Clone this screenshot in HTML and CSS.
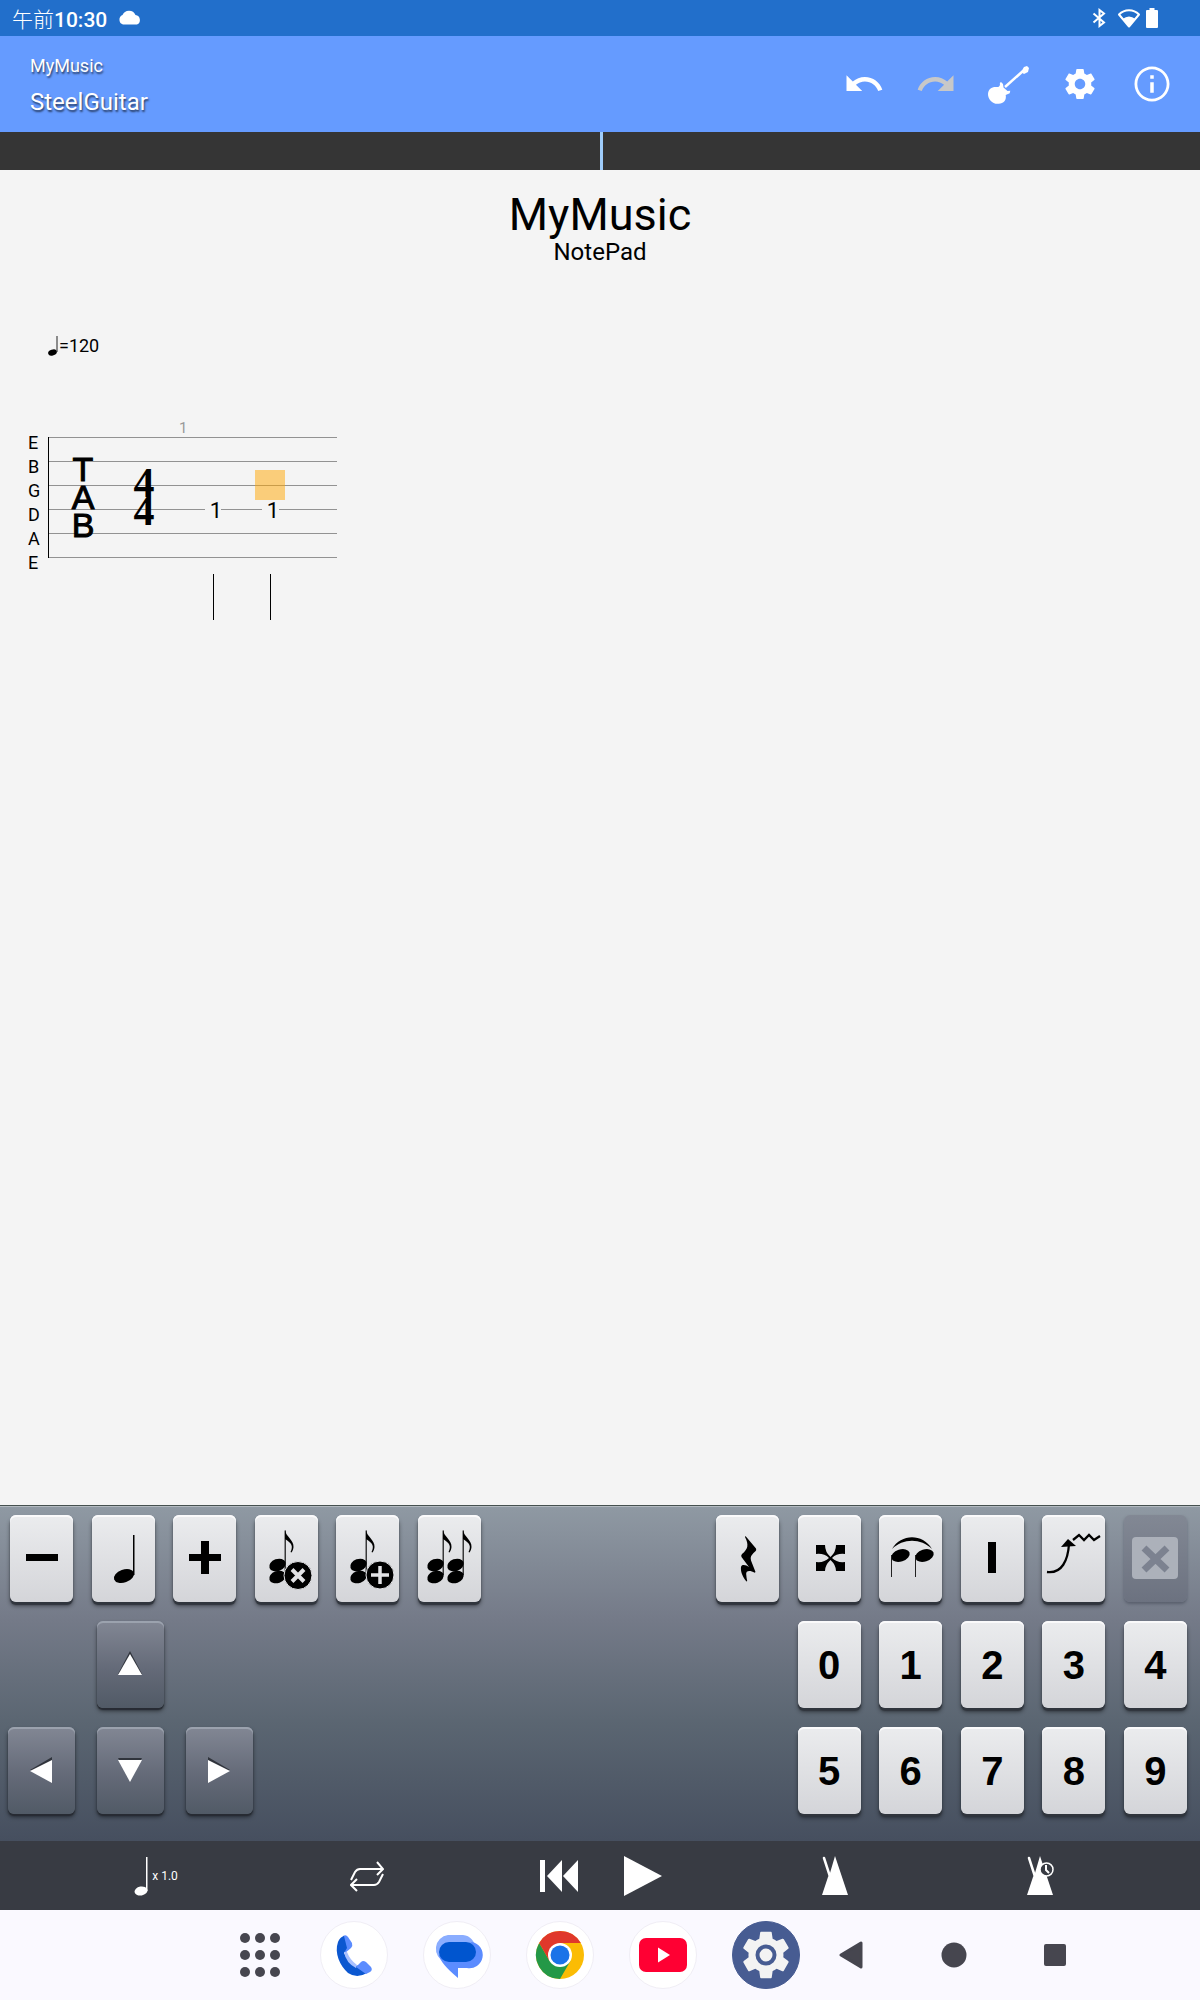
FILE: index.html
```html
<!DOCTYPE html>
<html lang="ja">
<head>
<meta charset="utf-8">
<meta name="viewport" content="width=device-width, initial-scale=1">
<title>MyMusic - SteelGuitar</title>
<link rel="stylesheet" href="styles.css">
</head>
<body>
<svg class="defs" aria-hidden="true">
  <defs>
    <path id="gear" d="M19.43 12.98c.04-.32.07-.64.07-.98s-.03-.66-.07-.98l2.11-1.65c.19-.15.24-.42.12-.64l-2-3.46c-.12-.22-.39-.3-.61-.22l-2.49 1c-.52-.4-1.08-.73-1.69-.98l-.38-2.65C14.46 2.18 14.25 2 14 2h-4c-.25 0-.46.18-.49.42l-.38 2.65c-.61.25-1.17.59-1.69.98l-2.49-1c-.23-.09-.49 0-.61.22l-2 3.46c-.13.22-.07.49.12.64l2.11 1.65c-.04.32-.07.65-.07.98s.03.66.07.98l-2.11 1.65c-.19.15-.24.42-.12.64l2 3.46c.12.22.39.3.61.22l2.49-1c.52.4 1.08.73 1.69.98l.38 2.65c.03.24.24.42.49.42h4c.25 0 .46-.18.49-.42l.38-2.65c.61-.25 1.17-.59 1.69-.98l2.49 1c.23.09.49 0 .61-.22l2-3.46c.12-.22.07-.49-.12-.64l-2.11-1.65zM12 15.5c-1.93 0-3.5-1.57-3.5-3.5s1.57-3.5 3.5-3.5 3.500 1.570 3.500 3.500-1.570 3.500-3.500 3.500z"/>
    <g id="chord">
      <ellipse cx="22.500" cy="50" rx="8.500" ry="6" transform="rotate(-20 22.500 50)"/>
      <ellipse cx="22.500" cy="62" rx="8.500" ry="6" transform="rotate(-20 22.500 62)"/>
      <path d="M29.500 15.500h1.500V60h-1.500z" opacity=".75"/>
      <path d="M30 15c1 7 9 10 8.500 17-.2 2-.8 4-2 5.500l-1-.5c3-6 1-9-5.500-13z"/>
    </g>
    <g id="metronome">
      <path d="M18 1L31 40H5L11 22 13 18z"/>
      <path d="M7 3l5.500 17" stroke="#fff" stroke-width="2.500" stroke-linecap="round"/>
    </g>
  </defs>
</svg>

<div class="statusbar">
  <div class="clock"><span><span class="ampm">午前</span>10:30</span>
    <svg width="24" height="16" viewBox="0 0 24 16" fill="#fff"><path d="M5 14.500a5 5 0 0 1-.5-9.400A7 7 0 0 1 17.500 5a5 5 0 0 1 1.500 9.500z"/></svg>
  </div>
  <div class="signals">
    <svg width="14" height="20" viewBox="0 0 14 20" fill="none" stroke="#fff" stroke-width="2"><path d="M1.500 5.500L12 14.500 7.500 18V2L12 5.500 1.500 14.500"/></svg>
    <svg width="24" height="20" viewBox="0 0 24 20"><path d="M12 18.500L2 6.500C7.500.8 16.500.8 22 6.500z" fill="none" stroke="#fff" stroke-width="2" stroke-linejoin="round"/><path d="M12 19L5.500 11q6.500-5 13 0z" fill="#fff"/></svg>
    <svg width="12" height="20" viewBox="0 0 12 20" fill="#fff"><path d="M3.500 0h5v2H11q1 0 1 1v16q0 1-1 1H1q-1 0-1-1V3q0-1 1-1h2.500z"/></svg>
  </div>
</div>

<header class="appbar">
  <div class="titles">
    <div class="file">MyMusic</div>
    <div class="track">SteelGuitar</div>
  </div>
  <div class="actions">
    <button type="button" aria-label="Undo"><svg width="42" height="42" viewBox="0 0 24 24" fill="#fff"><path d="M12.500 8c-2.650 0-5.050.99-6.900 2.600L2 7v9h9l-3.620-3.620c1.390-1.160 3.160-1.880 5.120-1.880 3.540 0 6.550 2.310 7.600 5.500l2.370-.78C21.080 11.030 17.150 8 12.500 8z"/></svg></button>
    <button type="button" aria-label="Redo"><svg width="42" height="42" viewBox="0 0 24 24" fill="#c8c8c8"><path d="M18.400 10.600C16.550 8.990 14.150 8 11.500 8c-4.650 0-8.580 3.030-9.960 7.220L3.900 16c1.050-3.190 4.050-5.500 7.600-5.500 1.950 0 3.730.72 5.120 1.880L13 16h9V7z"/></svg></button>
    <button type="button" aria-label="Instrument"><svg width="42" height="42" viewBox="0 0 42 42" fill="#fff"><path d="M18 24L36 8" stroke="#fff" stroke-width="2.500"/><path d="M34 9l3-5 3-1 2 2-1 4-4 2z"/><path d="M14 19l2 2 .5 3.500 4 3.500 2.800-.3-.6 2.500-4 1.800c1 5-2 8.500-7 8.800C5.500 41.500.800 36 1 31c.2-5 4-7.500 8.800-7 3 .2 3.500-2 3-4z"/></svg></button>
    <button type="button" aria-label="Settings"><svg width="36" height="36" viewBox="0 0 24 24" fill="#fff"><use href="#gear"/></svg></button>
    <button type="button" aria-label="Information"><svg width="42" height="42" viewBox="0 0 24 24" fill="#fff"><path d="M11 17h2v-6h-2v6zm1-15C6.480 2 2 6.480 2 12s4.480 10 10 10 10-4.480 10-10S17.520 2 12 2zm0 18.400c-4.640 0-8.400-3.760-8.400-8.400S7.360 3.600 12 3.600s8.400 3.760 8.400 8.400-3.760 8.400-8.400 8.400zM11 9h2V7h-2v2z"/></svg></button>
  </div>
</header>

<div class="timeline"><div class="playhead"></div></div>

<main class="score">
  <h1>MyMusic</h1>
  <p class="subtitle">NotePad</p>
  <svg class="staff" width="360" height="300" viewBox="0 330 360 300">
    <ellipse cx="52.500" cy="352.500" rx="4.500" ry="3" transform="rotate(-20 52.500 352.500)"/>
    <path d="M57 336V352" stroke="#222"/>
    <text class="tempo" x="59" y="352">=120</text>
    <text class="measure" x="179" y="433">1</text>
    <g class="strings">
      <text x="28" y="449">E</text><text x="28" y="473">B</text><text x="28" y="497">G</text>
      <text x="28" y="521">D</text><text x="28" y="545">A</text><text x="28" y="569">E</text>
    </g>
    <path d="M48 437.500H337M48 461.500H337M48 485.500H337M48 509.500H205M221 509.500H262M279 509.500H337M48 533.500H337M48 557.500H337" stroke="#929292"/>
    <path d="M48.500 437V558M213.500 574V620M270.500 574V620" stroke="#000"/>
    <g class="clef"><text x="83" y="481">T</text><text x="83" y="509">A</text><text x="83" y="537">B</text></g>
    <g class="meter"><text x="144" y="497">4</text><text x="144" y="525">4</text></g>
    <g class="fret"><text x="216" y="518">1</text><text x="273" y="518">1</text></g>
    <rect x="255" y="470" width="30" height="30" fill="#ffa500" opacity=".5"/>
  </svg>
</main>

<section class="keypad">
  <div class="left">
    <div class="keys">
      <button type="button" class="key" aria-label="Shorter"><svg viewBox="0 0 63 87"><path d="M16 39h32v7H16z"/></svg></button>
      <button type="button" class="key" aria-label="Quarter note"><svg viewBox="0 0 63 87"><ellipse cx="32" cy="61" rx="10.500" ry="6.500" transform="rotate(-20 32 61)"/><path d="M41 20h1.500v40H41z"/></svg></button>
      <button type="button" class="key" aria-label="Longer"><svg viewBox="0 0 63 87"><path d="M28 26h8v13h12v7H36v13h-8V46H16v-7h12z"/></svg></button>
      <button type="button" class="key" aria-label="Delete chord"><svg viewBox="0 0 63 87"><use href="#chord"/><circle cx="43" cy="60.500" r="14" stroke="#e2e2e5"/><path d="M37 54.500l12 12m0-12l-12 12" stroke="#e2e2e5" stroke-width="4"/></svg></button>
      <button type="button" class="key" aria-label="Insert chord"><svg viewBox="0 0 63 87"><use href="#chord"/><circle cx="44" cy="60" r="14" stroke="#e2e2e5"/><path d="M44 51v18m-9-9h18" stroke="#e2e2e5" stroke-width="3.500"/></svg></button>
      <button type="button" class="key" aria-label="Repeat chord"><svg viewBox="0 0 63 87"><use href="#chord" x="-5"/><use href="#chord" x="15"/></svg></button>
    </div>
    <div class="arrows">
      <button type="button" class="key dark up" aria-label="Up"><svg viewBox="0 0 67 87"><path d="M33 30L45 53H21z" fill="#30343c"/><path d="M33 33L45 54H21z" fill="#fff"/></svg></button>
      <button type="button" class="key dark" aria-label="Left"><svg viewBox="0 0 67 87"><path d="M44 30V53L22 43z" fill="#30343c"/><path d="M44 33V56L22 44z" fill="#fff"/></svg></button>
      <button type="button" class="key dark" aria-label="Down"><svg viewBox="0 0 67 87"><path d="M21 31H45L33 53z" fill="#30343c"/><path d="M21 33H45L33 55z" fill="#fff"/></svg></button>
      <button type="button" class="key dark" aria-label="Right"><svg viewBox="0 0 67 87"><path d="M22 30V53L44 43z" fill="#30343c"/><path d="M22 33V56L44 44z" fill="#fff"/></svg></button>
    </div>
  </div>
  <div class="right">
    <button type="button" class="key" aria-label="Rest"><svg viewBox="0 0 63 87"><path d="M29.500 21L40 33.500q.6 1.500-.3 2.500-6.500 5-4.700 9.500L39.500 57l-.8.800c-5-3-9-2-8.500 1.500q.3 4 1 6.700l-.8.600C26 61 24.500 56 25 52c.3-3 5-2.500 8 0L25.500 42q-.8-1.500.5-3c6-5 7-9 3-17z"/></svg></button>
    <button type="button" class="key" aria-label="Dead note"><svg viewBox="0 0 63 87"><path d="M18 30h9q0 7 5.500 12Q38 37 38 30h9v9q-8-1-13 4 5 5 13 4v9h-9q0-6-5.500-11Q27 50 27 56h-9v-9q8 1 13-4-5-5-13-4z"/></svg></button>
    <button type="button" class="key" aria-label="Tie"><svg viewBox="0 0 63 87"><path d="M13 34C22 19 43 18 53 34 42 23 24 23 13 34z"/><ellipse cx="21.500" cy="40.500" rx="9.500" ry="6" transform="rotate(-18 21.500 40.500)"/><ellipse cx="45.500" cy="40.500" rx="9.500" ry="6" transform="rotate(-18 45.500 40.500)"/><path d="M12.500 40V62M36.500 40V62" stroke="#222"/></svg></button>
    <button type="button" class="key" aria-label="Bar"><svg viewBox="0 0 63 87"><path d="M27 27h8v31h-8z"/></svg></button>
    <button type="button" class="key" aria-label="Effects"><svg viewBox="0 0 63 87"><path d="M5 57C20 59 26 45 27 29M31 25l6-5 5 5 5-5 5 5 6-4" fill="none" stroke="#000" stroke-width="2.300"/><path d="M26 24l8 7-15 1z"/></svg></button>
    <button type="button" class="key off" aria-label="Clear" disabled><svg viewBox="0 0 63 87"><rect x="8" y="22" width="46" height="42" rx="4" fill="#acb1ba"/><path d="M20 33L43 55M43 33L20 55" stroke="#7c8290" stroke-width="7"/></svg></button>
    <button type="button" class="key zero">0</button>
    <button type="button" class="key">1</button>
    <button type="button" class="key">2</button>
    <button type="button" class="key">3</button>
    <button type="button" class="key">4</button>
    <button type="button" class="key five">5</button>
    <button type="button" class="key">6</button>
    <button type="button" class="key">7</button>
    <button type="button" class="key">8</button>
    <button type="button" class="key">9</button>
  </div>
</section>

<div class="transport">
  <button type="button" aria-label="Speed"><svg width="16" height="40" viewBox="0 0 16 40" fill="#fff"><ellipse cx="7" cy="35" rx="6.500" ry="4.500" transform="rotate(-10 7 35)"/><path d="M12 1h1.500v34H12z"/></svg><span>x 1.0</span></button>
  <button type="button" aria-label="Loop"><svg width="34" height="32" viewBox="0 0 34 32" fill="none" stroke="#fff" stroke-width="2"><path d="M1 20L5 12Q7 9 10 9H32M33 14L29 22Q27 25 24 25H2M27 2l6 7-6 6M7 19L1 25l6 6"/></svg></button>
  <div class="play">
    <button type="button" aria-label="Rewind"><svg width="38" height="34" viewBox="0 0 38 34" fill="#fff"><path d="M0 1h5v32H0zM22 1V33L7 17zM38 1V33L23 17z"/></svg></button>
    <button type="button" aria-label="Play"><svg width="38" height="40" viewBox="0 0 38 40" fill="#fff"><path d="M0 0L38 20 0 40z"/></svg></button>
  </div>
  <button type="button" aria-label="Metronome"><svg width="36" height="42" viewBox="0 0 36 42" fill="#fff"><use href="#metronome"/></svg></button>
  <button type="button" aria-label="Count-in"><svg width="36" height="42" viewBox="0 0 36 42" fill="#fff"><use href="#metronome"/><circle cx="24.500" cy="14.500" r="6.500" fill="#383b43" stroke="#fff" stroke-width="1.500"/><path d="M24 10v5l3 3" fill="none" stroke="#fff" stroke-width="2"/></svg></button>
</div>

<nav class="dock">
  <div class="apps">
    <button type="button" class="all" aria-label="All apps"><svg width="40" height="46" viewBox="0 0 40 46" fill="#46464f"><circle cx="5" cy="6" r="5"/><circle cx="20" cy="6" r="5"/><circle cx="35" cy="6" r="5"/><circle cx="5" cy="23" r="5"/><circle cx="20" cy="23" r="5"/><circle cx="35" cy="23" r="5"/><circle cx="5" cy="40" r="5"/><circle cx="20" cy="40" r="5"/><circle cx="35" cy="40" r="5"/></svg></button>
    <button type="button" class="app" aria-label="Phone"><svg viewBox="0 0 66 66"><path d="M22 14q3-2 5 1l4 6q1 3-1 5l-6 5z" fill="#5b8cff"/><path d="M17 20q2-5 6-6l3 12-3 5q4 9 11 13l6-1 6 8q-10 6-19 0C19 44 13 31 17 20z" fill="#0b57d0"/><path d="M23 30l3 0q3 8 10 13l-1 3q-10-5-12-16z" fill="#a8c0ff"/><path d="M35 45l5-5q2-2 5 0l5 5q2 3-1 5l-4 2z" fill="#5b8cff"/></svg></button>
    <button type="button" class="app" aria-label="Messages"><svg viewBox="0 0 66 66"><path d="M24 13H39a13 13 0 0 1 12 14q-1 10-10 13H21A14 14 0 0 1 24 13z" fill="#8aadff"/><path d="M15 33q1 8 19 23V46H43A13 13 0 0 0 48 20z" fill="#5b8cff"/><rect x="15" y="20" width="37" height="20" rx="10" fill="#0055cf"/></svg></button>
    <button type="button" class="app" aria-label="Browser"><svg viewBox="0 0 66 66"><circle cx="33" cy="33" r="24" fill="#fbbc04"/><path d="M33 33l10.400 6L33 57A24 24 0 0 1 12.200 21l10.400 18z" fill="#249847"/><path d="M12.200 21A24 24 0 0 1 53.800 21H33L22 38z" fill="#e0382b"/><circle cx="33" cy="33" r="12" fill="#fff"/><circle cx="33" cy="33" r="9.500" fill="#1a73e8"/></svg></button>
    <button type="button" class="app" aria-label="Video"><svg viewBox="0 0 66 66"><rect x="9" y="16" width="48" height="34" rx="7" fill="#ff0033"/><path d="M28 25.500L40 33 28 40.500z" fill="#fff"/></svg></button>
    <button type="button" class="app blue" aria-label="Device settings"><svg viewBox="0 0 66 66"><g transform="translate(5 5) scale(2.330)" fill="#f3f3f3"><use href="#gear"/></g><circle cx="33" cy="33" r="8.500" fill="#f3f3f3" stroke="#475c92" stroke-width="4"/></svg></button>
  </div>
  <div class="system">
    <button type="button" aria-label="Back"><svg width="26" height="30" viewBox="0 0 26 30"><path d="M2 15L22 3V27z" fill="#46464f" stroke="#46464f" stroke-width="3" stroke-linejoin="round"/></svg></button>
    <button type="button" aria-label="Home"><svg width="26" height="26" viewBox="0 0 26 26"><circle cx="13" cy="13" r="12.500" fill="#46464f"/></svg></button>
    <button type="button" aria-label="Recent apps"><svg width="24" height="24" viewBox="0 0 24 24"><rect x="1" y="1" width="22" height="22" rx="2" fill="#46464f"/></svg></button>
  </div>
</nav>
</body>
</html>
```
FILE: styles.css
```css
* { box-sizing: border-box; }

body {
  margin: 0;
  min-height: 100vh;
  display: flex;
  flex-direction: column;
  background: #f4f4f4;
  font-family: Roboto, "Noto Sans CJK JP", sans-serif;
  color: #000;
}

button {
  display: flex;
  align-items: center;
  justify-content: center;
  margin: 0;
  padding: 0;
  border: 0;
  background: none;
  color: inherit;
  font: inherit;
}

svg { display: block; flex: none; }
.defs { position: absolute; width: 0; height: 0; }

.statusbar {
  display: flex;
  justify-content: space-between;
  align-items: center;
  height: 36px;
  padding: 0 42px 0 12px;
  background: #226fcb;
  color: #fff;
}
.clock { display: flex; align-items: center; gap: 11px; font-size: 21px; line-height: 36px; font-weight: 500; padding-top: 3px; }
.clock svg { margin-bottom: 4px; }
.ampm { font-weight: 300; }
.signals { display: flex; align-items: center; gap: 5px; }
.signals svg:first-child { margin-right: 6px; }

.appbar {
  display: flex;
  justify-content: space-between;
  align-items: center;
  min-height: 96px;
  padding: 0 24px 0 30px;
  background: #659bff;
  color: #fff;
}
.titles { text-shadow: 1px 2px 2px rgba(0, 0, 0, .6); }
.file { font-size: 18px; line-height: 36px; }
.track { font-size: 24px; line-height: 36px; }
.actions { display: flex; gap: 24px; }
.actions button { width: 48px; height: 48px; }

.timeline { height: 38px; padding-left: 50%; background: #353535; }
.playhead { width: 3px; height: 100%; background: #9fcdfb; }

.score { flex: 1; }
h1 { margin: 20px 0 0; font-size: 45px; line-height: 50px; font-weight: 400; text-align: center; }
.subtitle { margin: 0; font-size: 24px; line-height: 24px; text-align: center; }
.staff { margin-top: 66px; }
.tempo, .strings { font-size: 18px; }
.measure { font-size: 15px; fill: #999; }
.clef { font-family: "Liberation Sans", sans-serif; font-size: 34px; text-anchor: middle; stroke: #000; }
.meter { font-family: "Liberation Serif", serif; font-size: 42px; font-weight: 700; text-anchor: middle; }
.fret { font-size: 22px; text-anchor: middle; }

.keypad {
  display: flex;
  justify-content: space-between;
  padding: 9px 13px 27px 8px;
  border-top: 1px solid #45504f;
  box-shadow: inset 0 1px #b3bac0;
  background: linear-gradient(#8f99a3, #747a88 34%, #5b6672 64%, #464f5f);
}
.left { display: grid; gap: 19px; align-content: start; }
.keys { display: grid; grid-template-columns: repeat(6, 63px); justify-content: space-between; width: 473px; padding-left: 2px; }
.arrows { display: grid; grid-template-columns: repeat(3, 67px); gap: 19px 22px; }
.up { grid-column: 2; }
.up + .key { grid-column: 1; }
.right { display: grid; grid-template-columns: repeat(6, 63px); justify-content: space-between; align-content: start; row-gap: 19px; width: 471px; }
.zero, .five { grid-column: 2; }

.key {
  height: 87px;
  border-radius: 6px;
  background: linear-gradient(#ebecee, #d4d5d9);
  box-shadow: inset 0 2px #fafafb, 0 3px 1px #30353d, 0 4px 4px rgba(0, 0, 0, .45);
  color: #000;
  font-family: "Liberation Sans", sans-serif;
  font-size: 40px;
  font-weight: 700;
  line-height: 40px;
}
.key svg { width: 100%; height: 100%; }
.dark {
  background: linear-gradient(#828794, #646a78 55%, #515a66);
  box-shadow: inset 0 2px #9ba2ae, 0 2px 1px #272b33, 0 3px 4px rgba(0, 0, 0, .5);
}
.off {
  background: linear-gradient(#828894, #6c7280);
  box-shadow: 0 2px 3px rgba(60, 65, 80, .5);
}

.transport {
  display: grid;
  grid-template-columns: 210fr 212fr 256fr 212fr 198fr;
  align-items: center;
  justify-items: center;
  height: 69px;
  padding: 1px 61px 0 51px;
  background: #383b43;
  color: #fff;
  font-size: 12px;
}
.transport > button { gap: 2px; }
.play { display: flex; align-items: center; gap: 46px; }

.dock {
  display: flex;
  align-items: center;
  height: 90px;
  padding-left: 20%;
  background: #faf9ff;
}
.apps, .system { display: flex; align-items: center; }
.apps { gap: 35px; }
.all { margin-right: 5px; }
.app { width: 68px; height: 68px; border: 1px solid #f0eef5; border-radius: 50%; background: #fff; }
.app svg { width: 66px; height: 66px; }
.blue { background: #475c92; border-color: #475c92; }
.system { gap: 76px; margin-left: 39px; }
```
